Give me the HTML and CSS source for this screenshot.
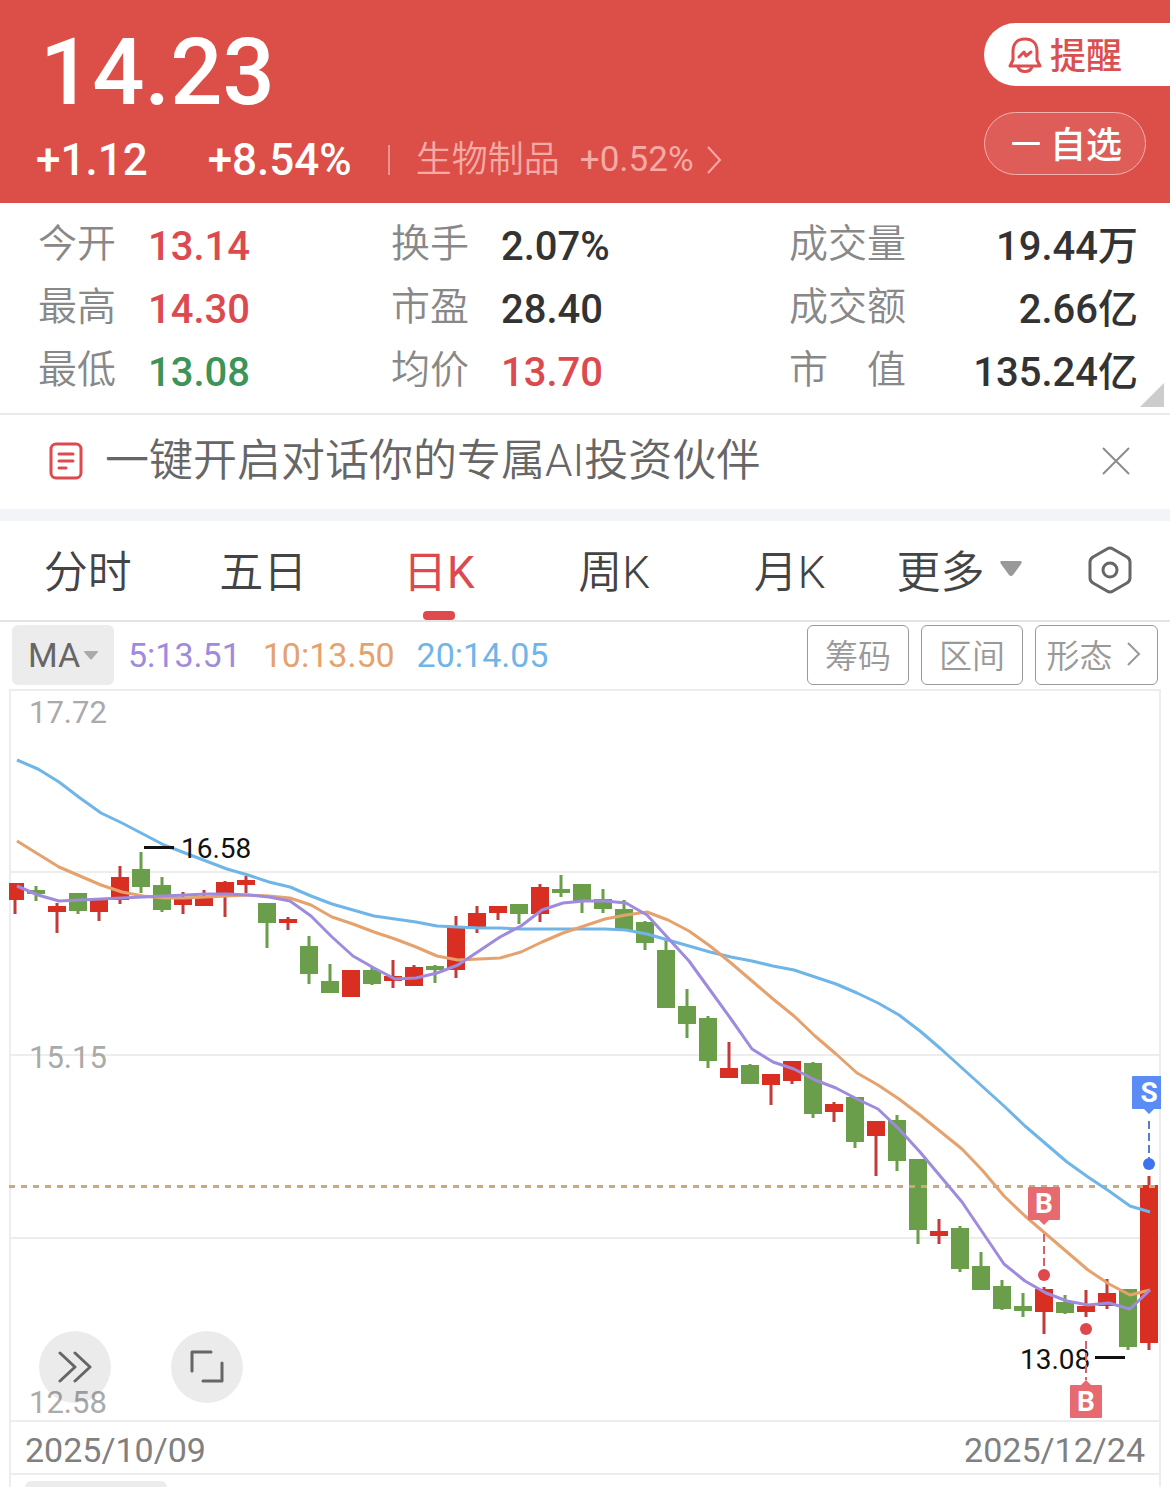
FILE: index.html
```html
<!DOCTYPE html>
<html lang="zh-CN">
<head>
<meta charset="utf-8">
<meta name="viewport" content="width=device-width, initial-scale=1">
<title>日K 行情</title>
<link rel="stylesheet" href="styles.css">
</head>
<body>
<header class="quote">
  <div class="quote-main">
    <div class="price">14.23</div>
    <div class="change-row">
      <span class="change">+1.12</span>
      <span class="change">+8.54%</span>
      <a class="sector" href="#sector">
        <span>生物制品</span>
        <span class="sector-change">+0.52%</span>
        <svg width="16" height="30" viewBox="0 0 16 30" fill="none" stroke="currentColor" stroke-width="2"><path d="M2 2 14 15 2 28"/></svg>
      </a>
    </div>
  </div>
  <div class="quote-actions">
    <button class="pill pill-remind" type="button">
      <svg width="34" height="36" viewBox="0 0 34 36" fill="none" stroke="currentColor" stroke-width="3" stroke-linejoin="round" stroke-linecap="round"><path d="M5 23V14C5 6 10 2 17 2s12 4 12 12v9l3 6H2z"/><path d="M10 30c2 6 12 6 14 0"/><path d="M11 20l5-5 2 4 5-4"/></svg>
      <span class="pill-label">提醒</span>
    </button>
    <button class="pill pill-watch" type="button">
      <svg width="28" height="4" viewBox="0 0 28 4" fill="currentColor"><rect width="28" height="3" rx="1"/></svg>
      <span class="pill-label">自选</span>
    </button>
  </div>
</header>

<section class="stats">
  <dl class="stat-col">
    <dt>今开</dt><dd class="up">13.14</dd>
    <dt>最高</dt><dd class="up">14.30</dd>
    <dt>最低</dt><dd class="down">13.08</dd>
  </dl>
  <dl class="stat-col">
    <dt>换手</dt><dd>2.07%</dd>
    <dt>市盈</dt><dd>28.40</dd>
    <dt>均价</dt><dd class="up">13.70</dd>
  </dl>
  <dl class="stat-col stat-col-wide">
    <dt>成交量</dt><dd>19.44万</dd>
    <dt>成交额</dt><dd>2.66亿</dd>
    <dt>市　值</dt><dd>135.24亿</dd>
  </dl>
  <svg class="stats-corner" width="24" height="24" viewBox="0 0 24 24"><path d="M24 0V24H0z" fill="#ccc"/></svg>
</section>

<section class="banner">
  <svg width="34" height="38" viewBox="0 0 34 38" fill="none" stroke="#dc4a50" stroke-width="3" stroke-linecap="round"><rect x="2" y="2" width="30" height="34" rx="5"/><path d="M10 12h14M10 19h14M10 26h7"/></svg>
  <a class="banner-text" href="#ai">一键开启对话你的专属AI投资伙伴</a>
  <button class="icon-button" type="button" aria-label="关闭">
    <svg width="28" height="28" viewBox="0 0 28 28" fill="none" stroke="#8c8c8c" stroke-width="2"><path d="M1 1 27 27M27 1 1 27"/></svg>
  </button>
</section>

<nav class="tabs">
  <button class="tab" type="button">分时</button>
  <button class="tab" type="button">五日</button>
  <button class="tab tab-active" type="button">日K</button>
  <button class="tab" type="button">周K</button>
  <button class="tab" type="button">月K</button>
  <button class="tab tab-more" type="button">更多
    <svg width="22" height="16" viewBox="0 0 22 16"><path d="M2 0h18q3 0 1 3l-8 11q-2 2-4 0L1 3q-2-3 1-3z" fill="#999"/></svg>
  </button>
  <button class="tab tab-settings" type="button" aria-label="设置">
    <svg width="44" height="48" viewBox="0 0 44 48" fill="none" stroke="#666" stroke-width="3" stroke-linejoin="round"><path d="M19 3q3-2 6 0l14 8q3 2 3 5v16q0 3-3 5l-14 8q-3 2-6 0L5 37q-3-2-3-5V16q0-3 3-5z"/><circle cx="22" cy="24" r="7"/></svg>
  </button>
</nav>

<section class="indicator">
  <button class="ma-select" type="button">MA
    <svg width="14" height="9" viewBox="0 0 14 9"><path d="M1 0h12q1 0 1 1L8 8q-1 1-2 0L0 1q0-1 1-1z" fill="#aaa"/></svg>
  </button>
  <span class="ma ma5">5:13.51</span>
  <span class="ma ma10">10:13.50</span>
  <span class="ma ma20">20:14.05</span>
  <div class="tools">
    <button class="tool" type="button">筹码</button>
    <button class="tool" type="button">区间</button>
    <button class="tool tool-more" type="button">形态
      <svg width="14" height="24" viewBox="0 0 14 24" fill="none" stroke="currentColor" stroke-width="2"><path d="M1 1 12 12 1 23"/></svg>
    </button>
  </div>
</section>

<section class="chart">
  <svg class="chart-svg" viewBox="0 689 1170 733" role="img" aria-label="日K线图">
    <g stroke="#ededed" stroke-width="2">
      <path d="M9 690H1161M10 872H1160M10 1055H1160M10 1238H1160M9 1421H1161M10 690V1422M1160 690V1422"/>
    </g>
    <g class="axis-label">
      <text x="29" y="723">17.72</text>
      <text x="29" y="1068">15.15</text>
      <text x="29" y="1413">12.58</text>
    </g>
    <g id="candles"></g>
    <path d="M9 1186.5H1160" stroke="#cda87a" stroke-width="3" stroke-dasharray="6 6"/>
    <g id="averages" fill="none" stroke-width="3" stroke-linejoin="round"></g>
    <g class="extreme">
      <path d="M144 847.500H174M1095 1357.500H1125" stroke="#111" stroke-width="3"/>
      <text x="181" y="858">16.58</text>
      <text x="1020" y="1369">13.08</text>
    </g>
    <g class="trade">
      <path d="M1044 1234V1270M1086 1341V1380" stroke="#d9606a" stroke-width="2" stroke-dasharray="8 4"/>
      <path d="M1149 1121V1158" stroke="#5580c8" stroke-width="2" stroke-dasharray="8 4"/>
      <circle cx="1044" cy="1275" r="6" fill="#e0474c"/>
      <circle cx="1086" cy="1329" r="6" fill="#e0474c"/>
      <circle cx="1149" cy="1164" r="6" fill="#3f73ee"/>
      <path d="M1029 1187h30q1 0 1 1v31q0 1-1 1h-10l-5 5-5-5h-10q-1 0-1-1v-31q0-1 1-1z" fill="#e66a70"/>
      <path d="M1071 1418h30q1 0 1-1v-31q0-1-1-1h-10l-5-5-5 5h-10q-1 0-1 1v31q0 1 1 1z" fill="#e66a70"/>
      <path d="M1133 1076h28v33h-7l-5 5-5-5h-11q-1 0-1-1v-31q0-1 1-1z" fill="#5b8cf5"/>
      <text x="1044" y="1213">B</text>
      <text x="1086" y="1411">B</text>
      <text x="1149" y="1102">S</text>
    </g>
  </svg>
  <div class="chart-buttons">
    <button class="round" type="button" aria-label="展开">
      <svg width="34" height="32" viewBox="0 0 34 32" fill="none" stroke="#666" stroke-width="3" stroke-linecap="round" stroke-linejoin="round"><path d="M2 2 17 16 2 30M17 2 32 16 17 30"/></svg>
    </button>
    <button class="round" type="button" aria-label="全屏">
      <svg width="34" height="34" viewBox="0 0 34 34" fill="none" stroke="#666" stroke-width="3" stroke-linecap="round" stroke-linejoin="round"><path d="M2 21V2H21M32 13V31H13"/></svg>
    </button>
  </div>
</section>

<div class="dates"><span>2025/10/09</span><span>2025/12/24</span></div>
<div class="next-panel"><div class="next-chip"></div></div>
<script src="chart.js"></script>
</body>
</html>
```
FILE: styles.css
```css
* { box-sizing: border-box; }
body {
  margin: 0;
  background: #fff;
  color: #333;
  font-family: Roboto, "Noto Sans CJK SC", sans-serif;
  overflow-x: hidden;
}
button {
  margin: 0;
  padding: 0;
  border: 0;
  background: none;
  color: inherit;
  font: inherit;
}
a { color: inherit; text-decoration: none; }
svg { flex: none; display: block; }

.quote {
  display: flex;
  justify-content: space-between;
  height: 203px;
  padding-left: 36px;
  background: #dc4f48;
  color: #fff;
}
.quote-main { padding-top: 26px; }
.price {
  padding-left: 4px;
  font-size: 92px;
  line-height: 94px;
  font-weight: 500;
}
.change-row {
  display: flex;
  align-items: center;
  gap: 60px;
  margin-top: 16px;
  line-height: 48px;
}
.change { font-size: 44px; font-weight: 500; }
.sector {
  display: flex;
  align-items: center;
  gap: 20px;
  margin-left: -24px;
  color: #f5aaa6;
  font-size: 36px;
  font-weight: 350;
}
.sector::before {
  content: "";
  width: 2px;
  height: 30px;
  margin-right: 6px;
  background: #ee948f;
}
.sector-change { font-size: 35px; font-weight: 400; }
.sector svg { margin-left: -8px; }
.quote-actions {
  display: flex;
  flex-direction: column;
  gap: 26px;
  width: 186px;
  padding-top: 23px;
}
.pill {
  display: flex;
  align-items: center;
  gap: 10px;
  height: 63px;
  padding-left: 24px;
  font-size: 36px;
  font-weight: 500;
}
.pill-label { padding-bottom: 4px; }
.pill-remind {
  gap: 8px;
  border-radius: 32px 0 0 32px;
  background: #fff;
  color: #dc4f50;
}
.pill-watch {
  width: 162px;
  padding-left: 27px;
  border: 1px solid #f4b0ad;
  border-radius: 32px;
  background: #de5d58;
}

.stats {
  position: relative;
  display: grid;
  grid-template-columns: 353fr 398fr 349fr;
  padding: 11px 32px 10px 38px;
  border-bottom: 2px solid #ebebeb;
}
.stat-col {
  display: grid;
  grid-template-columns: 110px 1fr;
  grid-auto-rows: 63px;
  margin: 0;
}
.stat-col-wide { grid-template-columns: 120px 1fr; }
.stat-col dt {
  color: #888;
  font-size: 39px;
  font-weight: 350;
  line-height: 60px;
}
.stat-col dd {
  margin: 0;
  font-size: 40px;
  font-weight: 500;
  line-height: 66px;
  white-space: nowrap;
}
.stat-col-wide dd { text-align: right; }
.stat-col .up { color: #dc4a50; }
.stat-col .down { color: #3c9459; }
.stats-corner { position: absolute; right: 6px; bottom: 6px; }

.banner {
  display: flex;
  align-items: center;
  gap: 22px;
  height: 94px;
  padding: 0 40px 2px 49px;
}
.banner-text {
  flex: 1;
  color: #666;
  font-size: 44px;
  font-weight: 350;
  line-height: 64px;
}

.tabs {
  display: grid;
  grid-template-columns: repeat(5, 15fr) 14fr 11fr;
  height: 113px;
  border-top: 12px solid #f3f4f8;
  border-bottom: 2px solid #e4e4e4;
  color: #444;
  font-size: 44px;
  font-weight: 350;
}
.tab {
  display: flex;
  flex-direction: column;
  align-items: center;
  justify-content: center;
  padding-bottom: 4px;
}
.tab-more {
  flex-direction: row;
  align-items: center;
  gap: 16px;
}
.tab-settings { padding: 0 0 2px 8px; }
.tab-active {
  position: relative;
  color: #dc4a50;
  font-weight: 400;
}
.tab-active::after {
  content: "";
  position: absolute;
  bottom: 0;
  width: 32px;
  height: 9px;
  border-radius: 4px;
  background: #e04a4e;
}

.indicator {
  display: flex;
  align-items: center;
  gap: 22px;
  padding: 3px 12px 4px;
  font-size: 34px;
}
.ma-select {
  display: flex;
  align-items: center;
  justify-content: center;
  gap: 4px;
  width: 102px;
  height: 60px;
  margin-right: -8px;
  border-radius: 6px;
  background: #ececec;
  color: #666;
}
.ma5 { color: #9f8bdd; }
.ma10 { color: #e5a26c; }
.ma20 { color: #6fb5e8; }
.tools {
  display: flex;
  gap: 12px;
  margin-left: auto;
}
.tool {
  display: flex;
  align-items: center;
  justify-content: center;
  gap: 14px;
  width: 102px;
  height: 60px;
  padding-bottom: 2px;
  border: 1px solid #999;
  border-radius: 6px;
  color: #999;
  font-size: 33px;
  font-weight: 350;
}
.tool-more { width: 123px; padding-right: 6px; }

.chart { position: relative; }
.chart-svg { width: 100%; height: auto; }
.axis-label { fill: #aaa; font-size: 31px; }
.extreme { fill: #111; font-size: 28px; }
.trade text {
  fill: #fff;
  font-size: 28px;
  font-weight: 700;
  text-anchor: middle;
}
.chart-buttons {
  position: absolute;
  left: 39px;
  bottom: 19px;
  display: flex;
  gap: 60px;
}
.round {
  display: flex;
  align-items: center;
  justify-content: center;
  width: 72px;
  height: 72px;
  border-radius: 50%;
  background: rgba(0, 0, 0, 0.08);
}

.dates {
  display: flex;
  align-items: center;
  justify-content: space-between;
  height: 53px;
  margin: 0 9px;
  padding: 4px 14px 0;
  border: solid #ededed;
  border-width: 0 2px 2px;
  color: #808080;
  font-size: 34px;
}
.next-panel {
  height: 12px;
  margin: 0 9px;
  padding: 6px 14px 0;
  border: solid #ededed;
  border-width: 0 2px;
}
.next-chip {
  width: 142px;
  height: 6px;
  border-radius: 6px 6px 0 0;
  background: #ececec;
}
```
FILE: chart.js
```js
// Candles: colour, body top, body bottom, wick top, wick bottom
const candles = [
  ["r",883,900,883,914],["g",890,894,886,901],["r",906,912,903,933],["g",893,911,893,914],
  ["r",899,912,899,921],["r",877,900,866,904],["g",869,887,852,893],["g",885,910,877,912],
  ["r",897,905,892,914],["r",897,906,890,906],["r",882,894,881,917],["r",880,885,876,893],
  ["g",903,923,903,948],["r",919,923,917,930],["g",946,974,936,984],["g",981,993,964,993],
  ["r",970,997,970,997],["g",970,984,967,985],["r",976,981,960,988],["r",967,986,965,986],
  ["g",966,970,965,983],["r",928,970,916,978],["r",913,927,906,933],["r",906,913,906,920],
  ["g",904,914,904,924],["r",887,914,884,922],["g",889,893,875,897],["g",884,901,884,913],
  ["g",899,909,889,913],["g",909,930,900,930],["g",922,943,921,950],["g",950,1008,940,1008],
  ["g",1006,1024,989,1038],["g",1018,1061,1016,1068],["r",1068,1078,1042,1078],["g",1065,1084,1064,1084],
  ["r",1074,1085,1074,1105],["r",1061,1081,1061,1084],["g",1063,1114,1062,1118],["r",1104,1112,1102,1122],
  ["g",1097,1142,1097,1148],["r",1121,1136,1121,1176],["g",1120,1161,1115,1171],["g",1159,1230,1159,1244],
  ["r",1231,1236,1219,1244],["g",1228,1269,1226,1272],["g",1266,1290,1252,1290],["g",1286,1309,1280,1310],
  ["g",1306,1311,1293,1317],["r",1289,1312,1287,1334],["g",1302,1313,1295,1314],["r",1306,1312,1290,1317],
  ["r",1293,1306,1279,1309],["g",1289,1347,1289,1350],["r",1185,1343,1176,1350]
];
const averages = {
  "#6fb5e8": [760,769,782,798,813,823,834,845,853,861,869,875,882,887,896,904,910,916,919,922,926,927,928,928,929,929,929,929,929,930,934,940,946,952,957,961,966,970,977,984,993,1003,1015,1031,1049,1068,1087,1106,1126,1144,1162,1177,1191,1206,1212],
  "#e5a26c": [841,854,867,876,885,892,896,898,898,897,896,895,896,898,905,917,924,932,939,947,956,960,959,958,952,942,933,926,919,915,912,920,931,946,963,981,999,1016,1036,1054,1073,1085,1099,1115,1132,1149,1171,1196,1216,1234,1252,1270,1284,1295,1290],
  "#9f8bdd": [886,895,901,900,899,898,897,896,895,894,894,895,897,901,916,937,956,968,979,978,973,965,951,937,926,910,903,901,901,903,915,938,961,990,1019,1049,1062,1069,1080,1088,1099,1109,1129,1152,1177,1202,1233,1264,1281,1293,1301,1305,1303,1309,1290]
};
const colors = { r: ["#d92f22", "#c23a3a"], g: ["#6b9e4a", "#6b9e4a"] };
const NS = "http://www.w3.org/2000/svg";

function add(parent, name, attrs) {
  const el = document.createElementNS(NS, name);
  for (const key in attrs) el.setAttribute(key, attrs[key]);
  parent.appendChild(el);
}

const candleGroup = document.getElementById("candles");
candles.forEach(([c, top, bottom, high, low], i) => {
  const x = 15 + 21 * i;
  const left = Math.max(x - 9, 9);
  add(candleGroup, "rect", { x: x - 1.5, y: high, width: 3, height: low - high, fill: colors[c][1] });
  add(candleGroup, "rect", { x: left, y: top, width: x + 9 - left, height: bottom - top, fill: colors[c][0] });
});

const averageGroup = document.getElementById("averages");
for (const color in averages) {
  const points = averages[color].map((y, i) => `${Math.min(17 + 21 * i, 1150)},${y}`).join(" ");
  add(averageGroup, "polyline", { points, stroke: color });
}
```
